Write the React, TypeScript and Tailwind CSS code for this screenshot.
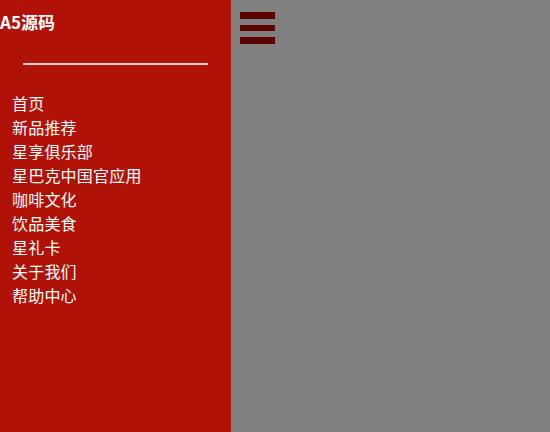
import React from "react";

const items = ["首页", "新品推荐", "星享俱乐部", "星巴克中国官应用", "咖啡文化", "饮品美食", "星礼卡", "关于我们", "帮助中心"];

export default function App() {
  return (
    <div className="flex w-[550px] h-[432px] overflow-hidden" style={{ fontFamily: '"Noto Sans CJK SC", "Liberation Sans", sans-serif' }}>
      <div className="w-[231px] h-full bg-[#b01208] text-white flex flex-col">
        <div className="mt-[10px] h-[24px] leading-[24px] text-[17px] font-bold pl-0">A5源码</div>
        <div className="mt-[29px] ml-[23px] w-[185px] h-[2px] bg-[#f4d2ce]" />
        <ul className="mt-[26px] pl-[12px] flex flex-col">
          {items.map((t) => (
            <li key={t} className="h-[24px] leading-[24px] text-[16px] tracking-[0.2px]">{t}</li>
          ))}
        </ul>
      </div>
      <div className="flex-1 h-full bg-[#808080] pt-[12px] pl-[9px]">
        <div className="flex flex-col gap-[6px] w-[35px]">
          <div className="h-[6.5px] bg-[#5c0000]" />
          <div className="h-[6.5px] bg-[#5c0000]" />
          <div className="h-[6.5px] bg-[#5c0000]" />
        </div>
      </div>
    </div>
  );
}
